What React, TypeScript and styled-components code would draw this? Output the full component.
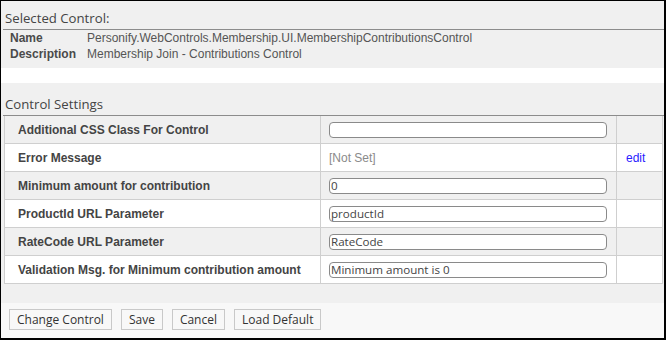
import React from "react";
import styled, { createGlobalStyle } from "styled-components";

const GlobalStyle = createGlobalStyle`
  html, body { margin: 0; padding: 0; background: #ffffff; }
  * { box-sizing: border-box; }
`;

const Frame = styled.div`
  width: 666px;
  height: 340px;
  border-style: solid;
  border-color: #000;
  border-width: 1px 2px 2px 1px;
  background: #f0f0f0;
  display: flex;
  flex-direction: column;
  overflow: hidden;
`;

const SectionTitle = styled.div<{ $top: number }>`
  margin: ${(p) => p.$top}px 0 0 2px;
  padding: 0 0 1px 2px;
  font-family: "Open Sans", sans-serif;
  font-size: 13.2px;
  line-height: 19px;
  color: #444;
  border-bottom: 1px solid #8c8c8c;
`;

const InfoList = styled.div`
  display: grid;
  grid-template-columns: 77px 1fr;
  padding: 0 0 6px 9px;
  font-family: "Liberation Sans", Arial, sans-serif;
  font-size: 12px;
  line-height: 16px;
`;

const InfoKey = styled.div`
  font-weight: bold;
  color: #4a4a4a;
`;

const InfoValue = styled.div`
  color: #555;
`;

const WhiteBand = styled.div`
  height: 15px;
  background: #ffffff;
`;

const SettingsTable = styled.div`
  margin: 0 0 0 3px;
  width: 659px;
  border-left: 1px solid #cfcfcf;
  border-right: 1px solid #cfcfcf;
`;

const Row = styled.div<{ $alt: boolean }>`
  display: grid;
  grid-template-columns: 316px 296px 1fr;
  height: 28px;
  border-bottom: 1px solid #cfcfcf;
  background: ${(p) => (p.$alt ? "#ffffff" : "#f0f0f0")};
`;

const LabelCell = styled.div`
  display: flex;
  align-items: center;
  padding-left: 13px;
  border-right: 1px solid #cfcfcf;
  font-family: "Liberation Sans", Arial, sans-serif;
  font-size: 12px;
  font-weight: bold;
  color: #444;
`;

const ValueCell = styled.div`
  display: flex;
  align-items: center;
  padding-left: 8px;
  border-right: 1px solid #cfcfcf;
`;

const ActionCell = styled.div`
  display: flex;
  align-items: center;
  padding-left: 9px;
`;

const TextInput = styled.input`
  width: 278px;
  height: 16px;
  margin: 0;
  padding: 0 1px;
  border: 1px solid #8a8a8a;
  border-radius: 4px;
  background: #ffffff;
  font-family: "Open Sans", sans-serif;
  font-size: 11.6px;
  line-height: 14px;
  color: #444;
  outline: none;
`;

const NotSet = styled.span`
  font-family: "Liberation Sans", Arial, sans-serif;
  font-size: 12px;
  color: #8a8a8a;
`;

const EditLink = styled.a`
  font-family: "Liberation Sans", Arial, sans-serif;
  font-size: 12px;
  color: #2a1bff;
  text-decoration: none;
  cursor: pointer;
`;

const Spacer = styled.div`
  height: 19px;
`;

const ButtonBar = styled.div`
  flex: 1;
  background: #f8f8f8;
  display: flex;
  align-items: flex-start;
  gap: 9px;
  padding: 6px 0 0 8px;
`;

const Button = styled.button`
  height: 21px;
  margin: 0;
  padding: 0 7px;
  border: 1px solid #c9c9c9;
  background: #f8f8f8;
  font-family: "Open Sans", sans-serif;
  font-size: 12px;
  color: #333;
  cursor: pointer;
`;

type Setting = {
  label: string;
  value?: string;
  notSet?: boolean;
};

const settings: Setting[] = [
  { label: "Additional CSS Class For Control", value: "" },
  { label: "Error Message", notSet: true },
  { label: "Minimum amount for contribution", value: "0" },
  { label: "ProductId URL Parameter", value: "productId" },
  { label: "RateCode URL Parameter", value: "RateCode" },
  { label: "Validation Msg. for Minimum contribution amount", value: "Minimum amount is 0" },
];

export default function App() {
  return (
    <>
      <GlobalStyle />
      <Frame>
        <SectionTitle $top={8}>Selected Control:</SectionTitle>
        <InfoList>
          <InfoKey>Name</InfoKey>
          <InfoValue>Personify.WebControls.Membership.UI.MembershipContributionsControl</InfoValue>
          <InfoKey>Description</InfoKey>
          <InfoValue>Membership Join - Contributions Control</InfoValue>
        </InfoList>
        <WhiteBand />
        <SectionTitle $top={12}>Control Settings</SectionTitle>
        <SettingsTable>
          {settings.map((s, i) => (
            <Row key={s.label} $alt={i % 2 === 1}>
              <LabelCell>{s.label}</LabelCell>
              <ValueCell>
                {s.notSet ? (
                  <NotSet>[Not Set]</NotSet>
                ) : (
                  <TextInput defaultValue={s.value} />
                )}
              </ValueCell>
              <ActionCell>{s.notSet ? <EditLink>edit</EditLink> : null}</ActionCell>
            </Row>
          ))}
        </SettingsTable>
        <Spacer />
        <ButtonBar>
          <Button>Change Control</Button>
          <Button>Save</Button>
          <Button>Cancel</Button>
          <Button>Load Default</Button>
        </ButtonBar>
      </Frame>
    </>
  );
}
